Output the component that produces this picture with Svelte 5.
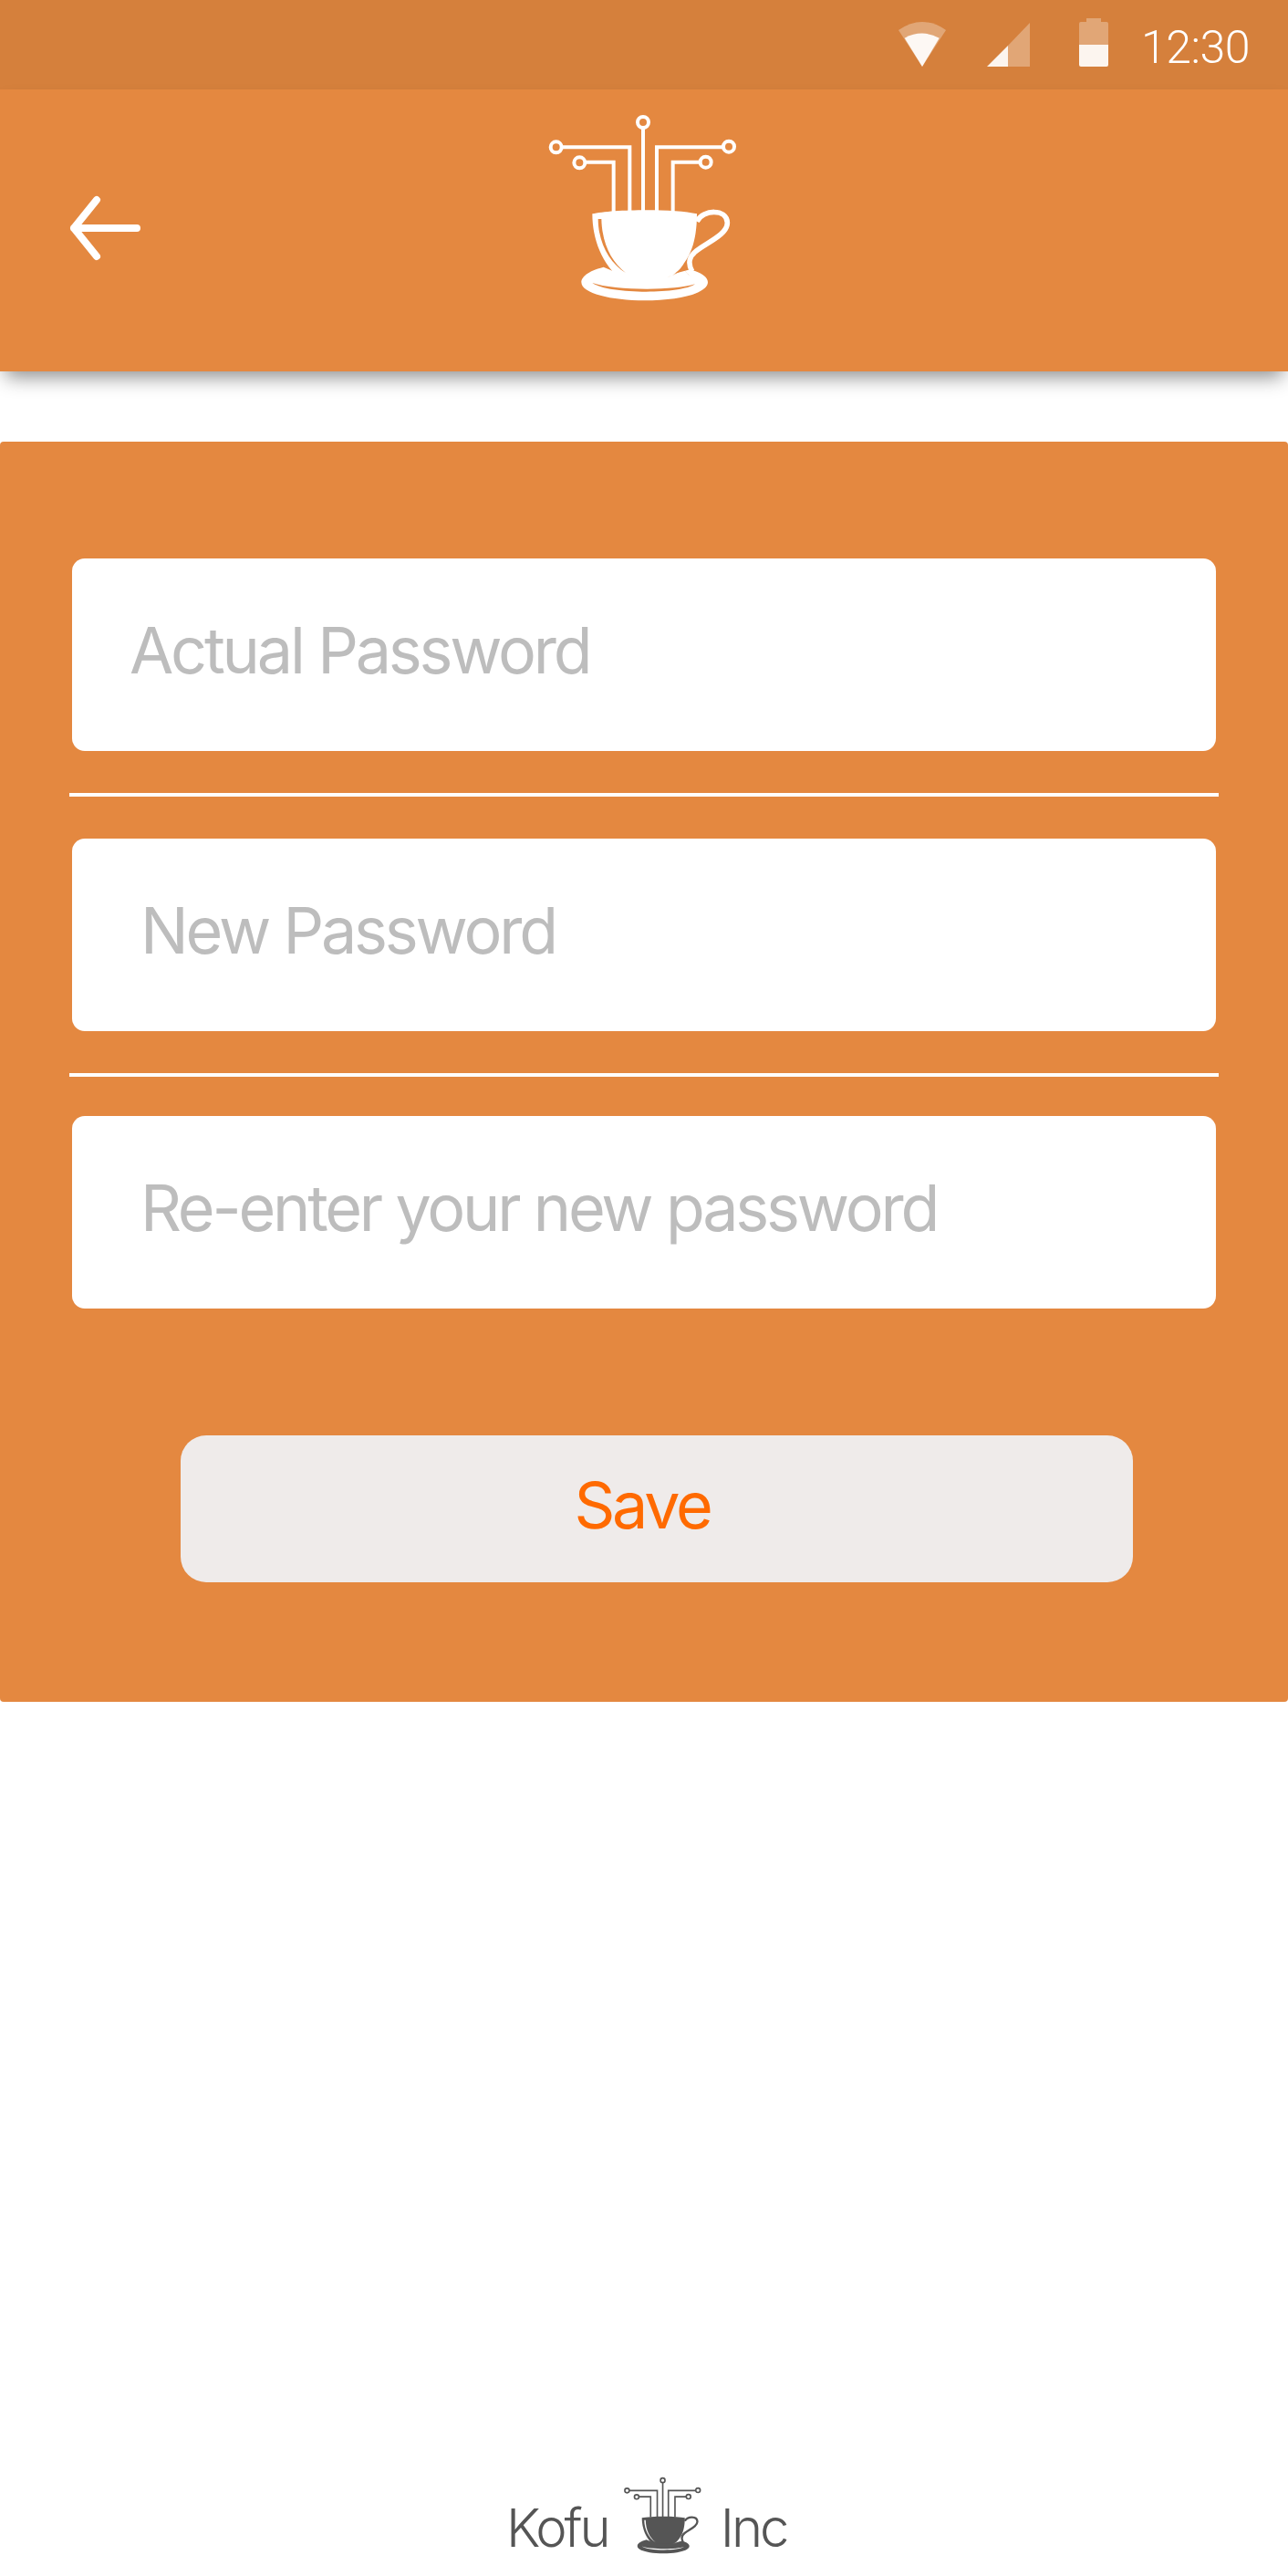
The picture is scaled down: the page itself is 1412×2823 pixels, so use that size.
<script>
  const fields = [
    { placeholder: "Actual Password", first: true },
    { placeholder: "New Password" },
    { placeholder: "Re-enter your new password" },
  ];
</script>

{#snippet logo(cls)}
  <svg class={cls} viewBox="0 0 840 750">
    <g class="traces">
      <circle cx="435" cy="102" r="18" />
      <path d="M435 120V396" />
      <circle cx="149" cy="184" r="18" />
      <path d="M167 184H391V396" />
      <circle cx="226" cy="235" r="18" />
      <path d="M244 233H338V396" />
      <circle cx="717" cy="182" r="18" />
      <path d="M699 184H480V396" />
      <circle cx="641" cy="233" r="18" />
      <path d="M623 233H533V396" />
      <path class="handle" d="M612 428C632 388 710 385 712 432C713 470 650 495 610 525C588 542 580 562 596 592" />
    </g>
    <path class="solid" d="M268 403C330 388 540 385 612 403C612 470 600 525 570 565C556 590 535 605 515 612L405 640C330 615 268 520 268 403Z" />
    <path class="solid" d="M305 578C250 592 232 612 232 628C232 665 330 688 440 688C550 688 648 665 648 628C648 610 625 596 590 586L500 610H380Z" />
    <path class="cut" d="M287 420L298 420C300 500 330 560 378 597C325 565 288 500 287 420Z" />
    <path class="cut" d="M268 630C340 656 540 656 606 634C560 668 320 668 268 630Z" />
    <path class="cut" d="M514 611C540 605 556 590 566 572C570 590 580 602 596 610C585 606 572 592 568 580C555 596 535 606 514 611Z" />
  </svg>
{/snippet}

<div class="page">
  <div class="status">
    <svg class="wifi" viewBox="0 0 52 49">
      <path class="dim" d="M0 9Q26 -9 52 9L26 49Z" />
      <path class="lit" d="M6.7 17.7Q26 7.5 44.7 17.7L26 49Z" />
    </svg>
    <svg class="signal" viewBox="0 0 47 48">
      <path class="dim" d="M23 25L47 0V48H23Z" />
      <path class="lit" d="M0 48L23 25V48Z" />
    </svg>
    <svg class="battery" viewBox="0 0 32 53">
      <path class="dim" d="M8 0H24V4H30Q32 4 32 6V29H0V6Q0 4 2 4H8Z" />
      <path class="lit" d="M0 29H32V51Q32 53 30 53H2Q0 53 0 51Z" />
    </svg>
    <span class="time">12:30</span>
  </div>

  <header>
    <svg class="back" viewBox="0 0 90 80">
      <path d="M36 9L11 40L36 71M11 40H80" />
    </svg>
    {@render logo("logo")}
  </header>

  <form class="card">
    {#each fields as field, i}
      {#if i > 0}<hr />{/if}
      <input type="password" class:first={field.first} placeholder={field.placeholder} />
    {/each}
    <button type="button">Save</button>
  </form>

  <footer>
    <span>Kofu</span>
    {@render logo("logo small")}
    <span>Inc</span>
  </footer>
</div>

<style>
  :global(body) {
    background: #fff;
  }
  * {
    box-sizing: border-box;
  }
  .page {
    display: flex;
    flex-direction: column;
    height: 2823px;
    font-family: Inter, sans-serif;
    overflow: hidden;
  }
  .status {
    display: flex;
    align-items: flex-start;
    height: 98px;
    padding-right: 42px;
    background: #d5803c;
    color: #fff;
  }
  .status svg {
    display: block;
    flex: none;
  }
  .dim {
    fill: rgba(255, 255, 255, 0.3);
  }
  .lit {
    fill: rgba(255, 255, 255, 0.92);
  }
  .wifi {
    width: 52px;
    height: 49px;
    margin: 24px 45px 0 auto;
  }
  .signal {
    width: 47px;
    height: 48px;
    margin: 25px 54px 0 0;
  }
  .battery {
    width: 32px;
    height: 53px;
    margin: 20px 36px 0 0;
  }
  .time {
    font-family: Roboto, sans-serif;
    font-size: 50px;
    font-weight: 300;
    line-height: 50px;
    margin-top: 27px;
    letter-spacing: -0.5px;
  }
  header {
    position: relative;
    z-index: 1;
    display: flex;
    align-items: flex-start;
    height: 309px;
    padding-left: 70px;
    background: #e48840;
    box-shadow: 0 12px 20px -6px rgba(0, 0, 0, 0.45);
  }
  .back {
    display: block;
    width: 90px;
    height: 80px;
    margin-top: 112px;
    fill: none;
    stroke: #fff;
    stroke-width: 8;
    stroke-linecap: round;
    stroke-linejoin: round;
  }
  .logo {
    display: block;
    width: 280px;
    height: 250px;
    margin: 2px 0 0 400px;
    color: #fff;
    --cut: #e48840;
    flex: none;
  }
  .traces {
    fill: none;
    stroke: currentColor;
    stroke-width: 12;
  }
  .handle {
    stroke-width: 17;
  }
  .solid {
    fill: currentColor;
  }
  .cut {
    fill: var(--cut);
  }
  .card {
    display: flex;
    flex-direction: column;
    margin-top: 77px;
    padding: 128px 79px 131px 79px;
    background: #e48840;
    border-radius: 4px;
  }
  input {
    display: block;
    width: 100%;
    height: 211px;
    padding: 0 0 10px 75px;
    border: 0;
    border-radius: 14px;
    background: #fff;
    font: 400 70px Inter, sans-serif;
    letter-spacing: -3.2px;
    outline: none;
  }
  input.first {
    padding-left: 63px;
  }
  input::placeholder {
    color: #bdbdbd;
    opacity: 1;
  }
  hr {
    height: 4px;
    margin: 46px -3px 46px -3px;
    border: 0;
    background: #fff;
  }
  hr:nth-of-type(2) {
    margin-bottom: 43px;
  }
  button {
    align-self: flex-start;
    width: 1044px;
    height: 161px;
    margin: 139px 0 0 119px;
    padding: 0 32px 8px 0;
    border: 0;
    border-radius: 28px;
    background: #efebea;
    color: #ff6a00;
    font: 400 70px Inter, sans-serif;
    letter-spacing: -3.2px;
  }
  footer {
    display: flex;
    align-items: flex-start;
    margin-top: auto;
    height: 150px;
    padding-left: 555px;
    color: #555;
    font-size: 58px;
    letter-spacing: -3px;
    line-height: 60px;
  }
  footer span {
    margin-top: 67px;
    font-weight: 300;
  }
  .logo.small {
    width: 115px;
    height: 103px;
    margin: 31px 8px 0 0;
    color: #555;
    --cut: #fff;
  }
</style>
